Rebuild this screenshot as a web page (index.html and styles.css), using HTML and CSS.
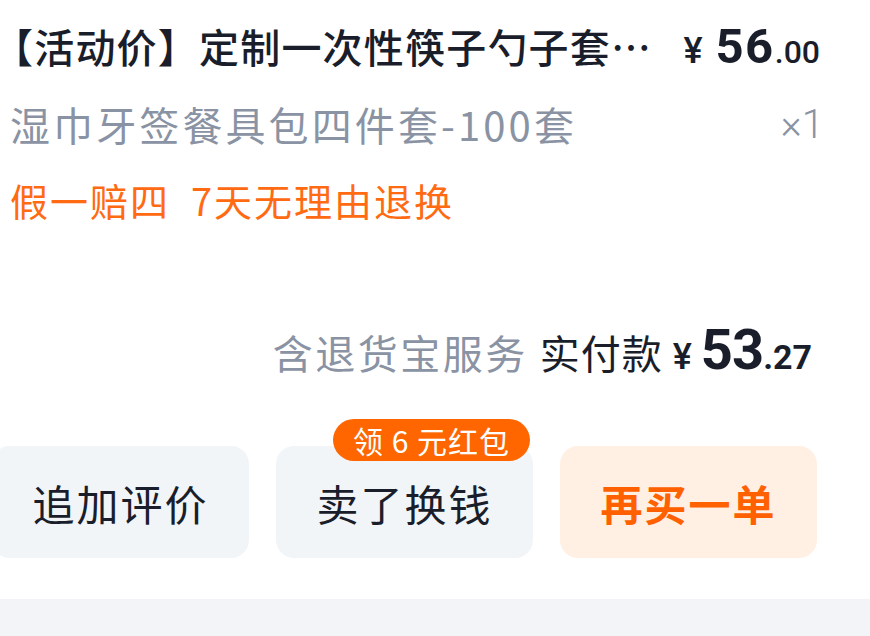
FILE: index.html
```html
<!DOCTYPE html>
<html lang="zh-CN">
<head>
    <meta charset="UTF-8">
    <meta name="viewport" content="width=device-width, initial-scale=1.0">
    <title>订单商品</title>
    <link rel="stylesheet" href="styles.css">
</head>
<body>
    <div class="order">
        <div class="goods-head">
            <div class="goods-title">【活动价】定制一次性筷子勺子套装湿巾牙签餐具包四件套</div>
            <div class="goods-price"><span class="yen">¥</span><span class="int">56</span><span class="dec">.00</span></div>
        </div>
        <div class="goods-sku">
            <span class="sku-name">湿巾牙签餐具包四件套-100套</span>
            <span class="sku-num">×1</span>
        </div>
        <div class="goods-tags">假一赔四&nbsp;&nbsp;7天无理由退换</div>

        <div class="pay-row">
            <span class="pay-note">含退货宝服务</span>
            <span class="pay-label">实付款</span>
            <span class="yen">¥</span><span class="pay-int">53</span><span class="pay-dec">.27</span>
        </div>

        <div class="actions">
            <button class="btn">追加评价</button>
            <button class="btn">卖了换钱<span class="badge">领 6 元红包</span></button>
            <button class="btn btn-primary">再买一单</button>
        </div>
    </div>
    <div class="divider"></div>
</body>
</html>
```

FILE: styles.css
```css
body { margin: 0; background: #fff; font-family: "Noto Sans CJK SC", "Noto Sans", sans-serif; color: #1a1e2b; overflow: hidden; }
.order { padding: 21px 50px 0 10px; }

.goods-head { display: flex; align-items: center; height: 50px; }
.goods-title { flex: 1; min-width: 0; margin-left: -17px; font-size: 40px; font-weight: 500; letter-spacing: 1.2px; line-height: 50px; white-space: nowrap; overflow: hidden; text-overflow: ellipsis; }
.goods-price { flex-shrink: 0; margin-left: 22px; padding-top: 12px; font-family: Roboto, "Noto Sans", sans-serif; font-weight: 700; line-height: 50px; }
.yen { font-family: Roboto, sans-serif; font-size: 36px; font-weight: 500; margin-right: 9px; }
.goods-price .yen { margin-right: 13px; }
.goods-price .int { font-size: 49px; letter-spacing: 1.5px; }
.goods-price .dec { font-size: 32px; font-weight: 500; }

.goods-sku { display: flex; justify-content: space-between; align-items: center; margin-top: 28px; height: 50px; color: #8a93a4; }
.sku-name { font-size: 40px; letter-spacing: 3.1px; }
.sku-num { margin-right: -4px; font-family: Roboto, sans-serif; font-size: 40px; font-weight: 300; }

.goods-tags { margin-top: 26px; line-height: 50px; font-size: 38px; letter-spacing: 2px; color: #ff6a12; }

.pay-row { display: flex; justify-content: flex-end; align-items: baseline; margin-top: 95px; margin-right: 8px; line-height: 60px; font-size: 40px; }
.pay-note { color: #8a93a4; margin-right: 12px; letter-spacing: 2.5px; }
.pay-label { margin-right: 10px; letter-spacing: 1px; }
.pay-row .yen { font-size: 36px; margin-right: 9px; }
.pay-int { font-family: Roboto, sans-serif; font-weight: 700; font-size: 56px; letter-spacing: -1px; }
.pay-dec { font-family: Roboto, sans-serif; font-weight: 700; font-size: 34px; }

.actions { display: flex; justify-content: flex-end; gap: 27px; margin-top: 59px; margin-right: 3px; }
.btn { position: relative; flex-shrink: 0; width: 257px; height: 112px; border: none; border-radius: 18px; background: #f2f5f8; color: #1a1e2b; font-family: inherit; font-size: 42px; letter-spacing: 2px; padding: 0; }
.btn-primary { background: #fff0e3; color: #ff6000; font-weight: 700; }
.badge { position: absolute; top: -27px; right: 3px; height: 42px; padding: 0 20px; border-radius: 21px; background: #ff6600; color: #fff; font-size: 30px; letter-spacing: 1px; line-height: 42px; white-space: nowrap; }

.divider { height: 40px; margin-top: 41px; background: #f2f4f7; }
```
